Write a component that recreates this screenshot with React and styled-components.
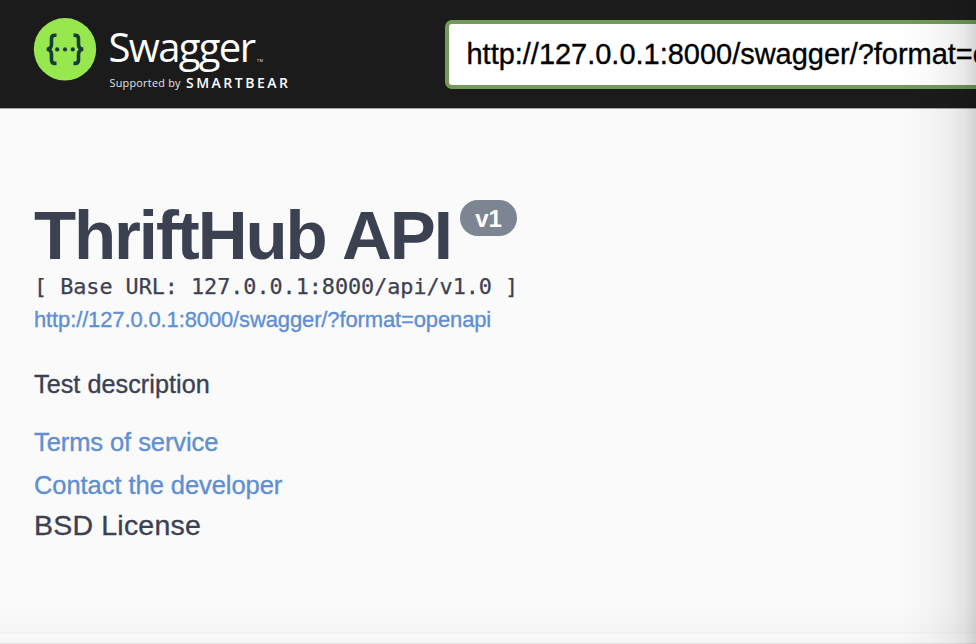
import React from "react";
import styled, { createGlobalStyle } from "styled-components";

const GlobalStyle = createGlobalStyle`
  *, *::before, *::after { box-sizing: border-box; }
  html, body { margin: 0; padding: 0; overflow: hidden; background: #fafafa; }
`;

const Page = styled.div`
  position: relative;
  display: flex;
  flex-direction: column;
  width: 976px;
  height: 644px;
  overflow: hidden;
  background: #fafafa;
  color: #3b4151;
  font-family: "Liberation Sans", Arial, sans-serif;
`;

const Topbar = styled.header`
  display: flex;
  flex: none;
  align-items: flex-start;
  height: 108px;
  background: #1b1b1b;
  box-shadow: 0 1px 0 #a9a5a6;
`;

const Logo = styled.svg`
  flex: none;
  width: 445px;
  height: 108px;
  font-family: "Open Sans", sans-serif;
`;

const UrlField = styled.div`
  flex: none;
  width: 640px;
  height: 69px;
  margin-top: 20px;
  padding: 0 17.5px;
  border: 4px solid #729b57;
  border-radius: 7px;
  background: #fff;
  color: #000;
  font-size: 29px;
  line-height: 61px;
  letter-spacing: -0.02px;
  -webkit-text-stroke: 0.35px currentColor;
  white-space: nowrap;
`;

const Info = styled.main`
  display: flex;
  flex: 1;
  flex-direction: column;
  align-items: flex-start;
  padding: 92px 34px 0;
`;

const TitleRow = styled.div`
  display: flex;
  align-items: flex-start;
  height: 72px;
`;

const Title = styled.h1`
  margin: 0;
  width: 426px;
  font-size: 69px;
  line-height: 72px;
  letter-spacing: -2.1px;
  word-spacing: 2px;
  white-space: nowrap;
`;

const Version = styled.span`
  width: 57px;
  height: 36px;
  border-radius: 18px;
  background: #7d8492;
  color: #fff;
  font-size: 24px;
  font-weight: 700;
  line-height: 37px;
  text-align: center;
`;

const BaseUrl = styled.pre`
  margin: 0;
  height: 30px;
  font-family: "DejaVu Sans Mono", monospace;
  font-size: 21.8px;
  line-height: 30px;
  letter-spacing: -0.04px;
  -webkit-text-stroke: 0.25px currentColor;
`;

const Line = styled.div`
  margin-top: ${(p) => p.$gap || 0}px;
  height: 34px;
  color: #3b4151;
  font-size: ${(p) => p.$size}px;
  line-height: 34px;
  letter-spacing: ${(p) => p.$spacing || 0}px;
  -webkit-text-stroke: 0.35px currentColor;
  white-space: nowrap;
`;

const Link = styled(Line)`
  color: #5f8fd2;
`;

const Footer = styled.footer`
  flex: none;
  height: 38px;
  border-bottom: 1px solid #e4e5e6;
  background: linear-gradient(#fafafa 0, #f5f5f5 26px, #eeeeee 27px, #f9f9f9 28px, #f6f6f7 37px);
`;

const EdgeShade = styled.div`
  position: absolute;
  top: 0;
  right: 0;
  bottom: 0;
  width: 76px;
  pointer-events: none;
  background: linear-gradient(to right, rgba(0, 0, 0, 0), rgba(0, 0, 0, 0.02) 35%, rgba(0, 0, 0, 0.05) 65%, rgba(0, 0, 0, 0.09) 85%, rgba(0, 0, 0, 0.16));
`;

function SwaggerLogo() {
  return (
    <Logo viewBox="0 0 445 108" role="img" aria-label="Swagger">
      <circle cx="65" cy="49.3" r="31.2" fill="#97e84f" />
      <g fill="none" stroke="#173d3a" strokeWidth="3.6">
        <path d="M56.5 35.2h-1.6c-2.4 0-3.4 1.2-3.4 3.5v5.2c0 3.2-1.4 5-4.6 5.4 3.2.4 4.6 2.2 4.6 5.4v5.2c0 2.3 1 3.5 3.4 3.5h1.6" />
        <path d="M73.5 35.2h1.6c2.4 0 3.4 1.2 3.4 3.5v5.2c0 3.2 1.4 5 4.6 5.4-3.2.4-4.6 2.2-4.6 5.4v5.2c0 2.3-1 3.5-3.4 3.5h-1.6" />
      </g>
      <g fill="#173d3a">
        <circle cx="57.2" cy="49.4" r="2.1" />
        <circle cx="65" cy="49.4" r="2.1" />
        <circle cx="72.8" cy="49.4" r="2.1" />
      </g>
      <g fill="#fff">
        <text x="108.5" y="62" fontSize="40" textLength="147.5" lengthAdjust="spacing">Swagger</text>
        <text x="257" y="62" fontSize="3.5" textLength="6">TM</text>
        <text x="109.5" y="87.3" fontSize="10.8" fill="#e4e4e4" textLength="71">Supported by</text>
        <text x="186" y="87.5" fontSize="14" fontWeight="600" textLength="102">SMARTBEAR</text>
      </g>
    </Logo>
  );
}

export default function App() {
  return (
    <Page>
      <GlobalStyle />
      <Topbar>
        <SwaggerLogo />
        <UrlField>http://127.0.0.1:8000/swagger/?format=openapi</UrlField>
      </Topbar>
      <Info>
        <TitleRow>
          <Title>ThriftHub API</Title>
          <Version>v1</Version>
        </TitleRow>
        <BaseUrl>[ Base URL: 127.0.0.1:8000/api/v1.0 ]</BaseUrl>
        <Link $size={22} $gap={1} $spacing={-0.13}>http://127.0.0.1:8000/swagger/?format=openapi</Link>
        <Line $size={25.2} $gap={30} $spacing={0.05}>Test description</Line>
        <Link $size={25.5} $gap={24} $spacing={-0.08}>Terms of service</Link>
        <Link $size={25.5} $gap={9} $spacing={-0.06}>Contact the developer</Link>
        <Line $size={28.5} $gap={6} $spacing={0.2}>BSD License</Line>
      </Info>
      <Footer />
      <EdgeShade />
    </Page>
  );
}
